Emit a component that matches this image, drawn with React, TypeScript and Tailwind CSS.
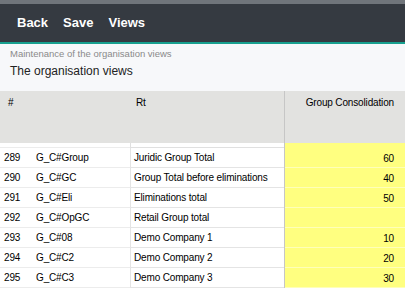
const rows = [
  { n: "289", code: "G_C#Group", rt: "Juridic Group Total", v: "60" },
  { n: "290", code: "G_C#GC", rt: "Group Total before eliminations", v: "40" },
  { n: "291", code: "G_C#Eli", rt: "Eliminations total", v: "50" },
  { n: "292", code: "G_C#OpGC", rt: "Retail Group total", v: "" },
  { n: "293", code: "G_C#08", rt: "Demo Company 1", v: "10" },
  { n: "294", code: "G_C#C2", rt: "Demo Company 2", v: "20" },
  { n: "295", code: "G_C#C3", rt: "Demo Company 3", v: "30" },
];

const font = { fontFamily: '"Liberation Sans", Arial, sans-serif' };

export default function App() {
  return (
    <div className="w-[405px] h-[288px] overflow-hidden bg-white" style={font}>
      <div className="h-[4px] bg-[#70757b]" />
      <nav className="h-[38px] bg-[#353a41] flex items-center gap-[15px] px-[17px] text-white text-[13px] font-semibold">
        <span>Back</span>
        <span>Save</span>
        <span>Views</span>
      </nav>
      <div className="h-[2px] bg-[#17a08f]" />
      <div className="h-[47px] bg-[#f7f8fa] px-[10px] pt-[3px]">
        <div className="text-[9.5px] text-[#8a8a8a] leading-[14px]">Maintenance of the organisation views</div>
        <div className="text-[12px] text-[#222] leading-[18px] mt-[1px]">The organisation views</div>
      </div>
      <div className="grid grid-cols-[32px_98px_154px_121px] h-[52px] bg-[#e2e2e0] text-[10px] tracking-[-0.15px] text-black">
        <div className="col-span-2 pl-[8px] pt-[4px]">#</div>
        <div className="pl-[6px] pt-[4px]">Rt</div>
        <div className="border-l border-[#c6c6c6] text-right pr-[11px] pt-[4px]">Group Consolidation</div>
      </div>
      <div className="grid grid-cols-[32px_98px_154px_121px] text-[10px] tracking-[-0.15px] text-black">
        <div className="col-span-2 h-[5px] border-b border-[#ececec]" />
        <div className="h-[5px] border-l border-b border-[#e0e0e0]" />
        <div className="h-[5px] border-l border-[#c6c6c6] bg-[#ffff80]" />
        {rows.map((r) => (
          <div key={r.n} className="contents">
            <div className="h-[20px] border-b border-[#ececec] flex items-center pl-[4px]">{r.n}</div>
            <div className="h-[20px] border-b border-[#ececec] flex items-center pl-[4px]">{r.code}</div>
            <div className="h-[20px] border-b border-l border-[#e4e4e4] flex items-center pl-[3px] whitespace-nowrap">{r.rt}</div>
            <div className="h-[20px] border-l border-[#c6c6c6] bg-[#ffff80] flex items-center justify-end pr-[11px] relative">
              <span className="absolute left-0 right-0 bottom-0 h-px bg-[#ffffb8]" />
              {r.v}
            </div>
          </div>
        ))}
      </div>
    </div>
  );
}
